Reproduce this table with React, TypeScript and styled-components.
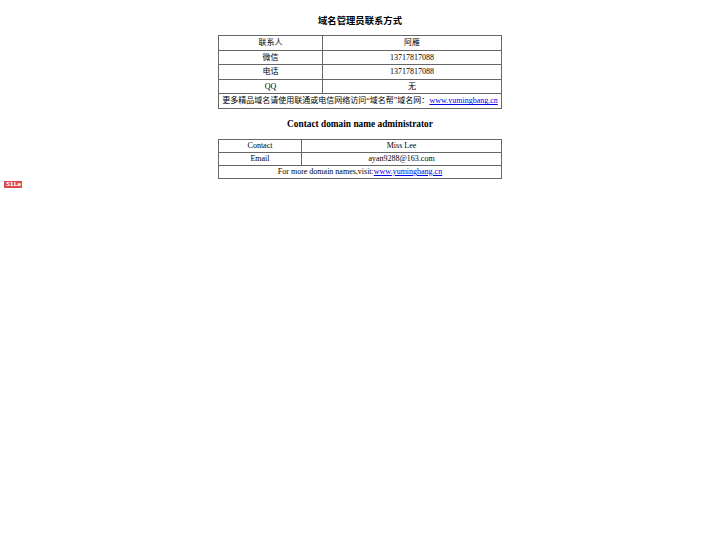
import React from "react";
import styled, { createGlobalStyle } from "styled-components";

const Global = createGlobalStyle`
  html, body { margin: 0; padding: 0; background: #fff; }
  body {
    font-family: "Liberation Serif", "Noto Sans CJK SC", serif;
    color: #000;
  }
`;

const Page = styled.div`
  padding: 5px 4px 0 4px;
  display: flex;
  flex-direction: column;
`;

const Title = styled.h2<{ $top: number; $bottom: number }>`
  margin: ${(p) => p.$top}px 0 ${(p) => p.$bottom}px 0;
  font-size: 9.33px;
  line-height: 14px;
  font-weight: bold;
  text-align: center;
`;

const Table = styled.table`
  width: 284px;
  margin: 0 auto;
  border-collapse: collapse;
  border: 1px solid #666;
  font-size: 8px;
`;

const Cell = styled.td<{ $w?: number; $h: number }>`
  border: 1px solid #666;
  padding: 0;
  text-align: center;
  height: ${(p) => p.$h}px;
  line-height: ${(p) => p.$h}px;
  width: ${(p) => (p.$w ? `${p.$w}px` : "auto")};
  white-space: nowrap;
`;

const Link = styled.a`
  color: #0000ee;
  text-decoration: underline;
`;

const Badge = styled.span`
  align-self: flex-start;
  margin-top: 2px;
  display: inline-block;
  background: #e0484c;
  color: #fff;
  font-family: "DejaVu Sans", sans-serif;
  font-weight: bold;
  font-size: 5.5px;
  line-height: 7px;
  padding: 0 2px;
  width: 14px;
  text-align: center;
`;

const cnRows: [string, string][] = [
  ["联系人", "阿雁"],
  ["微信", "13717817088"],
  ["电话", "13717817088"],
  ["QQ", "无"],
];

const enRows: [string, string][] = [
  ["Contact", "Miss Lee"],
  ["Email", "ayan9288@163.com"],
];

export default function App() {
  return (
    <>
      <Global />
      <Page>
        <Title $top={9} $bottom={7}>域名管理员联系方式</Title>
        <Table>
          <tbody>
            {cnRows.map(([k, v], i) => (
              <tr key={i}>
                <Cell $w={103} $h={13.6}>{k}</Cell>
                <Cell $h={13.6}>{v}</Cell>
              </tr>
            ))}
            <tr>
              <Cell colSpan={2} $h={13.6}>
                更多精品域名请使用联通或电信网络访问“域名帮”域名网：
                <Link href="#">www.yumingbang.cn</Link>
              </Cell>
            </tr>
          </tbody>
        </Table>
        <Title $top={8} $bottom={8}>Contact domain name administrator</Title>
        <Table>
          <tbody>
            {enRows.map(([k, v], i) => (
              <tr key={i}>
                <Cell $w={82} $h={12}>{k}</Cell>
                <Cell $h={12}>{v}</Cell>
              </tr>
            ))}
            <tr>
              <Cell colSpan={2} $h={12}>
                For more domain names,visit:
                <Link href="#">www.yumingbang.cn</Link>
              </Cell>
            </tr>
          </tbody>
        </Table>
        <Badge>51La</Badge>
      </Page>
    </>
  );
}
